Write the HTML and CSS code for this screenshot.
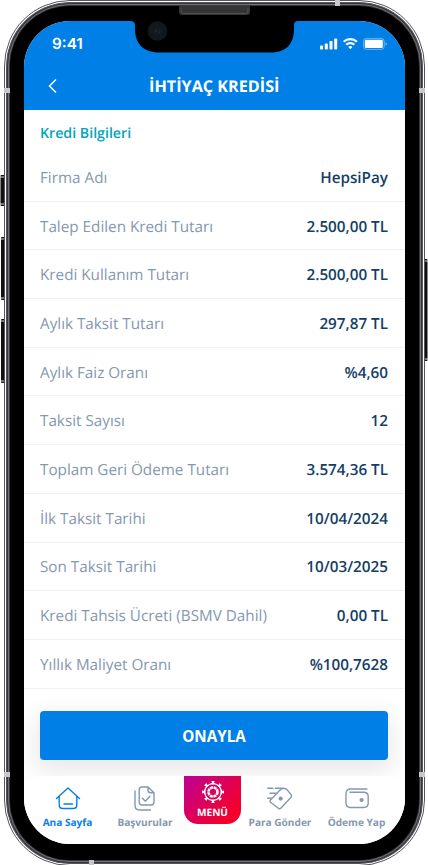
FILE: index.html
```html
<!DOCTYPE html>
<html lang="tr">
<head>
<meta charset="utf-8">
<title>İhtiyaç Kredisi</title>
<link rel="stylesheet" href="styles.css">
</head>
<body>
<div class="phone">
  <svg class="frame" width="428" height="865" viewBox="0 0 428 865" fill="none">
    <g fill="#111">
      <rect x=".5" y="175" width="5" height="31" rx="1"/>
      <rect x="1" y="237" width="5" height="63" rx="1"/>
      <rect x="1" y="319" width="5" height="64" rx="1"/>
      <rect x="423" y="259" width="4.500" height="102" rx="1"/>
    </g>
    <path d="M0 177h4M0 204h4M1 239h4M1 298h4M1 321h4M1 381h4M424 261h4M424 359h4" stroke="#ddd"/>
    <rect x="4.500" y=".5" width="420" height="865" rx="65.500" fill="#fff" stroke="#55535a"/>
    <rect x="6.500" y="2.500" width="416" height="861" rx="63.500" fill="#38373c" stroke="#55545a"/>
    <rect x="8.500" y="4.500" width="412" height="857" rx="61.500" stroke="#747278"/>
    <rect x="10" y="6" width="409" height="854" rx="60" fill="#000"/>
    <path d="M4 90.500h6M419 90.500h6M4 774.500h6M419 774.500h6" stroke="#c8c8c8" stroke-width="5"/>
    <path d="M337.500 0v6M91.500 860v5" stroke="#c8c8c8" stroke-width="5"/>
    <path d="M179 6h71v6q0 3-3 3h-65q-3 0-3-3z" fill="#343436"/>
    <path d="M181 8v3q0 2.500 2.500 2.500h62q2.500 0 2.500-2.500V8" stroke="#505052"/>
  </svg>
  <main class="screen">
    <svg class="notch" width="168" height="32" viewBox="0 0 168 32">
      <path d="M0 0h168q-4 0-4 4v4c0 15-8 23.500-23 23.500H29C14 31.500 5 23 5 8V4q0-4-5-4z" fill="#000"/>
      <circle cx="27.500" cy="10" r="9.800" fill="#12171d"/>
      <circle cx="27.500" cy="10" r="4.500" fill="#171a20"/>
      <path d="M25 10h2M29 11h1" stroke="#303039"/>
    </svg>
    <header class="top">
      <div class="status">
        <span class="clock">9:41</span>
        <svg width="68" height="14" viewBox="0 0 68 14" fill="#fff">
          <rect x="0" y="8.500" width="3" height="4" rx=".8"/>
          <rect x="4.800" y="6.500" width="3" height="6" rx=".8"/>
          <rect x="9.500" y="4" width="3" height="8.500" rx=".8"/>
          <rect x="14.200" y="1.500" width="3" height="11" rx=".8"/>
          <path d="M23.700 4.800a9.500 9.500 0 0 1 13.200 0M26.300 7.700a5.700 5.700 0 0 1 8 0" fill="none" stroke="#fff" stroke-width="2.200"/>
          <path d="M28.300 10a2.900 2.900 0 0 1 4 0l-2 2.200z"/>
          <rect x="43.400" y="1.400" width="20.800" height="11" rx="3" fill="none" stroke="#fff" stroke-opacity=".45" stroke-width=".9"/>
          <rect x="44.800" y="2.800" width="18" height="8.200" rx="1.200"/>
          <path d="M65.500 5.200v3.500q1.300-.5 1.300-1.750t-1.300-1.750z" opacity=".5"/>
        </svg>
      </div>
      <div class="titlebar">
        <svg class="back" width="10" height="16" viewBox="0 0 10 16"><path d="M8 1.500 1.500 8 8 14.500" fill="none" stroke="#fff" stroke-width="1.500"/></svg>
        <h1>İHTİYAÇ KREDİSİ</h1>
      </div>
    </header>
    <h2>Kredi Bilgileri</h2>
    <dl class="details">
      <div class="row"><dt>Firma Adı</dt><dd>HepsiPay</dd></div>
      <div class="row"><dt>Talep Edilen Kredi Tutarı</dt><dd>2.500,00 TL</dd></div>
      <div class="row"><dt>Kredi Kullanım Tutarı</dt><dd>2.500,00 TL</dd></div>
      <div class="row"><dt>Aylık Taksit Tutarı</dt><dd>297,87 TL</dd></div>
      <div class="row"><dt>Aylık Faiz Oranı</dt><dd>%4,60</dd></div>
      <div class="row"><dt>Taksit Sayısı</dt><dd>12</dd></div>
      <div class="row"><dt>Toplam Geri Ödeme Tutarı</dt><dd>3.574,36 TL</dd></div>
      <div class="row"><dt>İlk Taksit Tarihi</dt><dd>10/04/2024</dd></div>
      <div class="row"><dt>Son Taksit Tarihi</dt><dd>10/03/2025</dd></div>
      <div class="row"><dt>Kredi Tahsis Ücreti (BSMV Dahil)</dt><dd>0,00 TL</dd></div>
      <div class="row"><dt>Yıllık Maliyet Oranı</dt><dd>%100,7628</dd></div>
    </dl>
    <div class="action"><button class="approve">ONAYLA</button></div>
    <nav class="tabs">
      <a class="tab active">
        <svg width="26" height="26" viewBox="0 0 26 26"><path d="M1.500 12.500 13 2l11.500 10.500M4.200 10.500V19q0 3.500 3.500 3.500h10.600q3.500 0 3.500-3.500v-8.500M9 18h8.500"/></svg>
        <span>Ana Sayfa</span>
      </a>
      <a class="tab">
        <svg width="26" height="26" viewBox="0 0 26 26"><path d="M16 1H10Q7.200 1 7.200 4v12q0 3 2.800 3h9q3 0 3-3V6.700zM16 1v3.200q0 2.500 2.500 2.500H22M10.500 12.200l2.800 3 4.700-5M3 5v14.500Q3 24 7.500 24h11"/></svg>
        <span>Başvurular</span>
      </a>
      <a class="menu">
        <svg width="26" height="26" viewBox="0 0 26 26" fill="none" stroke="#fff">
          <circle cx="13" cy="13" r="8.300" stroke-width="1.200"/>
          <circle cx="13" cy="13" r="4.500" stroke-width="2.600" stroke-dasharray="2.950 .584"/>
          <g fill="#fff" stroke="none">
            <path id="tooth" d="m9.800 5.200 1.800-.8.400-1.200-.8-1.200h3.600l-.8 1.200.4 1.200 1.800.8z"/>
            <use href="#tooth" transform="rotate(45 13 13)"/><use href="#tooth" transform="rotate(90 13 13)"/><use href="#tooth" transform="rotate(135 13 13)"/><use href="#tooth" transform="rotate(180 13 13)"/><use href="#tooth" transform="rotate(225 13 13)"/><use href="#tooth" transform="rotate(270 13 13)"/><use href="#tooth" transform="rotate(315 13 13)"/>
          </g>
        </svg>
        <span>MENÜ</span>
      </a>
      <a class="tab">
        <svg width="26" height="26" viewBox="0 0 26 26"><path d="m3.500 14 10.300-10.700q.8-.8 2-.8h2q1.200 0 2 .9l4.300 5.300q1 1.300 0 2.500L14 22q-1.500 1.600-3 0l-7.400-5.800q-1.200-1.100-.1-2.200zM.7 2.300h5.300M8.300 2.300h8.200M3 7.300h6.500M.7 12.300H5"/><circle class="dot" cx="13.700" cy="12.600" r="2.100"/></svg>
        <span>Para Gönder</span>
      </a>
      <a class="tab">
        <svg width="26" height="26" viewBox="0 0 26 26"><path d="M23 3H6.500Q2 3 2 7.500V17q0 4.500 4.500 4.500h13.200q4.500 0 4.500-4.500v-6.500q0-4.200-4.500-4.200H6"/><circle class="dot" cx="17.600" cy="14" r="2.100"/></svg>
        <span>Ödeme Yap</span>
      </a>
    </nav>
  </main>
</div>
</body>
</html>
```
FILE: styles.css
```css
* { box-sizing: border-box; }
body { margin: 0; background: #fff; font-family: "Open Sans", sans-serif; overflow: hidden; text-rendering: geometricPrecision; }
h1, h2, dl, dd { margin: 0; }
.phone { position: relative; width: 428px; height: 865px; padding: 21px 23.5px 21px 24px; }
.frame { position: absolute; left: 0; top: 0; }
.screen { position: relative; display: flex; flex-direction: column; height: 823px; background: #fff; border-radius: 46px; overflow: hidden; }
.notch { position: absolute; left: 106px; top: 0; }
.top { height: 89px; background: #007fe7; color: #fff; }
.status { display: flex; justify-content: space-between; align-items: center; height: 46px; padding: 0 16.5px 0 28px; }
.clock { font: 600 15.3px/20px Inter, sans-serif; }
.titlebar { display: flex; align-items: center; height: 38px; padding-left: 24px; }
h1 { flex: 1; padding-right: 34px; text-align: center; font-size: 16.2px; font-weight: 700; line-height: 22px; }
h2 { height: 43px; padding: 14px 16px 0; color: #00a5bd; font-size: 14.2px; font-weight: 600; line-height: 20px; }
.row { display: flex; justify-content: space-between; align-items: center; height: 48.7px; padding: 2px 16.5px 0 16px; border-bottom: 1px solid #edf0f6; font-size: 15.25px; line-height: 20px; }
dt { color: #8498b0; }
dd { color: #153e66; font-weight: 600; }
.action { flex: 1; padding: 22px 16.5px 0 16px; }
.approve { display: block; width: 100%; height: 49px; padding: 2px 0 0; border: 0; border-radius: 4px; background: #007fe7; color: #fff; font: 700 15.2px/20px "Open Sans", sans-serif; box-shadow: 0 8px 24px 4px rgba(0,0,0,.09); }
.tabs { display: grid; grid-template-columns: 87px 68px 62px 78px 75px; height: 68px; position: relative; background: #fff; border-radius: 18px 18px 0 0; }
.tab, .menu { display: flex; flex-direction: column; align-items: center; white-space: nowrap; font-size: 10.1px; line-height: 14px; font-weight: 700; }
.tab { padding-top: 10px; gap: 2.5px; color: #8398b1; }
.tab svg { fill: none; stroke: currentColor; stroke-width: 1.4; stroke-linecap: round; stroke-linejoin: round; }
.tab .dot { fill: currentColor; stroke: none; }
.tab.active { color: #087fe7; }
.menu { height: 48px; margin-left: 5px; padding-top: 3px; background: linear-gradient(135deg, #bd0096, #f4002c 80%); border-radius: 0 0 14px 14px; color: #fff; }
```
